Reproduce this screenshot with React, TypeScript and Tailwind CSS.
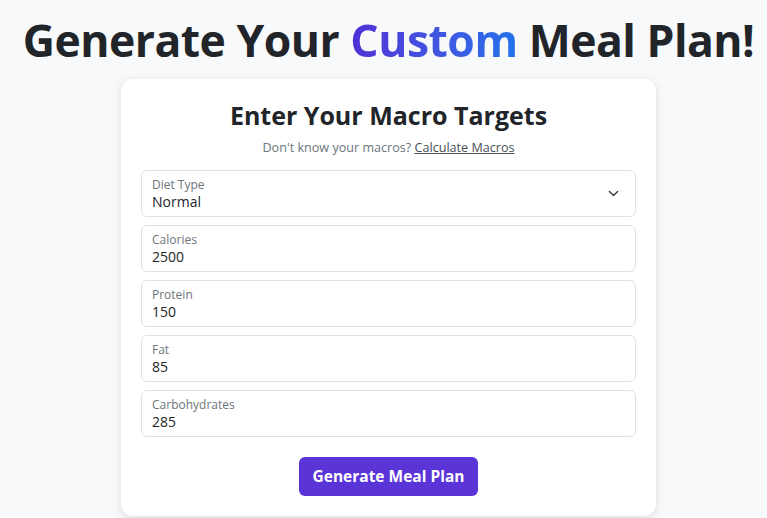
import React from 'react';

const fields = [
    { label: 'Calories', value: '2500' },
    { label: 'Protein', value: '150' },
    { label: 'Fat', value: '85' },
    { label: 'Carbohydrates', value: '285' },
];

const Field: React.FC<{ label: string; value: string; select?: boolean }> = ({ label, value, select }) => (
    <div className="h-[47px] rounded-md border border-[#dee2e6] bg-white pl-[10px] pr-4 flex items-center justify-between">
        <div className="flex flex-col">
            <span className="text-[12px] leading-[16px] text-[#6c757d]">{label}</span>
            <span className="text-[14px] leading-[18px] text-[#212529]">{value}</span>
        </div>
        {select && (
            <svg width="11" height="11" viewBox="0 0 16 16" fill="none" stroke="#343a40" strokeWidth="2" strokeLinecap="round" strokeLinejoin="round">
                <path d="M2 5l6 6 6-6" />
            </svg>
        )}
    </div>
);

const App: React.FC = () => {
    return (
        <div className="min-h-[518px] bg-[#f8f9fa] pl-[10px] flex flex-col items-center font-['Open_Sans',sans-serif] text-[#212529]">
            <h1 className="mt-[12px] text-[44.5px] leading-[56px] font-bold tracking-[-0.5px] whitespace-nowrap">
                Generate Your{' '}
                <span className="bg-gradient-to-r from-[#4f2fd6] to-[#1f72ea] bg-clip-text text-transparent">Custom</span>{' '}
                Meal Plan!
            </h1>
            <div className="mt-[11px] w-[535px] bg-white rounded-xl shadow-[0_2px_8px_rgba(0,0,0,0.12)] px-5 pt-[18px] pb-5">
                <h2 className="text-center text-[25px] leading-[36px] font-bold">Enter Your Macro Targets</h2>
                <p className="mt-[6px] text-center text-[12.6px] leading-[18px] text-[#6c757d]">
                    Don't know your macros? <a href="#" className="underline text-[#495057]">Calculate Macros</a>
                </p>
                <div className="mt-[13px] flex flex-col gap-[8px]">
                    <Field label="Diet Type" value="Normal" select />
                    {fields.map((f) => (
                        <Field key={f.label} label={f.label} value={f.value} />
                    ))}
                </div>
                <div className="mt-5 flex justify-center">
                    <button className="h-[39px] px-[14px] rounded-md bg-[#5b34d8] text-white text-[15.5px] font-bold">
                        Generate Meal Plan
                    </button>
                </div>
            </div>
        </div>
    );
};

export default App;
